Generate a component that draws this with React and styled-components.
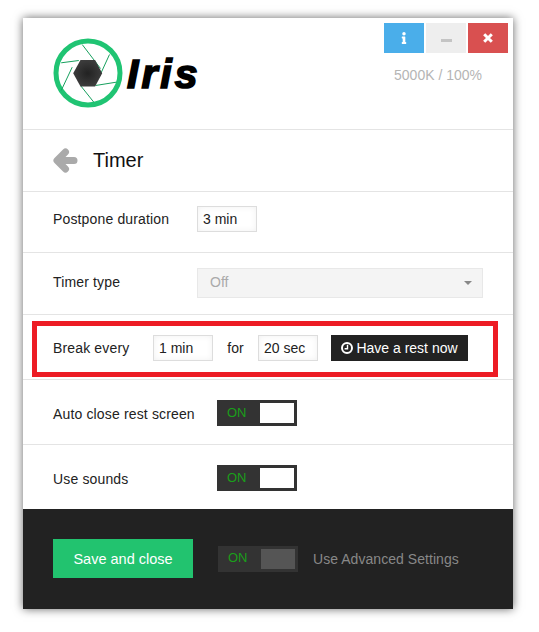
import React from "react";
import styled, { createGlobalStyle } from "styled-components";
import { FaInfo } from "react-icons/fa";

const Global = createGlobalStyle`
  html, body { margin: 0; padding: 0; background: #fff; }
  body { font-family: "Liberation Sans", Arial, sans-serif; font-size: 14px; color: #222; }
  * { box-sizing: border-box; }
`;

const Page = styled.div`
  width: 539px;
  height: 632px;
  padding: 18px 26px 23px 23px;
  overflow: hidden;
`;

const Panel = styled.div`
  width: 490px;
  height: 591px;
  background: #fff;
  display: flex;
  flex-direction: column;
  box-shadow: 0 0 9px rgba(0, 0, 0, 0.6);
`;

const Header = styled.header`
  height: 112px;
  flex: none;
  display: flex;
  justify-content: space-between;
  border-bottom: 1px solid #e4e4e4;
  padding: 5px 5px 0 30px;
`;

const Brand = styled.div`
  display: flex;
  align-items: flex-start;
  padding-top: 15px;
`;

const LogoMark = styled.svg`
  width: 70px;
  height: 70px;
  flex: none;
`;

const Wordmark = styled.span`
  font-family: "Liberation Sans", Arial, sans-serif;
  font-weight: 700;
  font-style: italic;
  font-size: 41px;
  line-height: 46px;
  margin: 13px 0 0 4px;
  letter-spacing: 3px;
  color: #000;
  -webkit-text-stroke: 1.7px #000;
`;

const HeaderRight = styled.div`
  display: flex;
  flex-direction: column;
  align-items: flex-end;
`;

const WindowButtons = styled.div`
  display: flex;
  gap: 2px;
`;

const WindowButton = styled.div`
  width: 40px;
  height: 30px;
  display: flex;
  align-items: center;
  justify-content: center;
  background: ${(p) => p.$bg};
  color: ${(p) => p.$fg};
  font-size: 12px;
`;

const MinusGlyph = styled.span`
  width: 11px;
  height: 3px;
  margin-top: 5px;
  background: #c4c4c4;
`;

const Status = styled.div`
  margin: 14px 26px 0 0;
  font-size: 14px;
  line-height: 16px;
  color: #b5b5b5;
`;

const TitleRow = styled.div`
  height: 62px;
  flex: none;
  display: flex;
  align-items: center;
  padding: 0 0 0 30px;
  border-bottom: 1px solid #e4e4e4;
`;

const BackIcon = styled.svg`
  width: 25px;
  height: 25px;
  flex: none;
  margin-right: 15px;
`;

const Title = styled.h1`
  margin: 0;
  font-size: 20px;
  font-weight: 400;
  color: #111;
`;

const Row = styled.div`
  height: ${(p) => p.$h}px;
  flex: none;
  display: flex;
  align-items: center;
  padding: ${(p) => p.$pt || 0}px 0 ${(p) => p.$pb || 0}px 30px;
  position: relative;
  border-bottom: ${(p) => (p.$last ? "none" : "1px solid #e4e4e4")};
`;

const Label = styled.span`
  width: ${(p) => (p.$w ? `${p.$w}px` : "auto")};
  flex: none;
  white-space: nowrap;
  letter-spacing: 0.15px;
  margin-top: ${(p) => p.$dy || 0}px;
`;

const ValueInput = styled.input`
  width: 60px;
  height: 26px;
  flex: none;
  border: 1px solid #ddd;
  padding: 0 5px;
  font: 14px "Liberation Sans", Arial, sans-serif;
  color: #222;
  background: #fff;
  outline: none;
  box-shadow: inset 0 0 6px rgba(0, 0, 0, 0.06);
`;

const Select = styled.div`
  width: 286px;
  height: 30px;
  flex: none;
  display: flex;
  align-items: center;
  justify-content: space-between;
  padding: 0 10px 2px 12px;
  background: #f4f4f4;
  border: 1px solid #e8e8e8;
  color: #aaa;
`;

const Caret = styled.span`
  width: 0;
  height: 0;
  margin-top: 2px;
  border-left: 4px solid transparent;
  border-right: 4px solid transparent;
  border-top: 4px solid #888;
`;

const ForLabel = styled.span`
  flex: none;
  width: 45px;
  text-align: center;
`;

const RestButton = styled.button`
  width: 137px;
  height: 26px;
  flex: none;
  margin-left: 13px;
  display: flex;
  align-items: center;
  justify-content: center;
  gap: 3px;
  border: 0;
  padding: 0;
  background: #222;
  color: #fff;
  font: 14px "Liberation Sans", Arial, sans-serif;
`;

const Highlight = styled.div`
  position: absolute;
  left: 9px;
  top: 6px;
  width: 466px;
  height: 56px;
  border: 5px solid #ed1c24;
  pointer-events: none;
`;

const Toggle = styled.div`
  width: 80px;
  height: 26px;
  flex: none;
  display: flex;
  align-items: center;
  justify-content: space-between;
  padding: 3px 3px 3px 10px;
  background: #333;
`;

const ToggleText = styled.span`
  color: #1a9f1a;
  font-size: 13px;
  margin-top: -2px;
`;

const Knob = styled.span`
  width: 34px;
  height: 20px;
  background: ${(p) => p.$bg};
`;

const Footer = styled.footer`
  flex: 1;
  display: flex;
  align-items: center;
  padding: 0 0 1px 30px;
  background: #222;
`;

const SaveButton = styled.button`
  width: 140px;
  height: 39px;
  flex: none;
  border: 0;
  padding: 0;
  background: #22c36f;
  color: #fff;
  font: 14.5px "Liberation Sans", Arial, sans-serif;
  margin-right: 25px;
`;

const AdvancedLabel = styled.span`
  margin-left: 15px;
  color: #888;
  letter-spacing: 0.05px;
`;

const blades = [
  [60.7, 62.3, 78.3, 60],
  [81.7, 44, 100, 68],
  [109, 54, 98, 78],
  [115.7, 81.7, 95, 85],
  [93.3, 101.7, 80, 85],
  [60.7, 90, 71.7, 66.7],
];

function Logo() {
  return (
    <LogoMark viewBox="52.5 37.5 70 70">
      <defs>
        <radialGradient id="hex">
          <stop offset="0" stopColor="#222" />
          <stop offset="1" stopColor="#3c3c3c" />
        </radialGradient>
      </defs>
      <circle cx="87.5" cy="72.5" r="32" fill="#fff" stroke="#20c473" strokeWidth="5" />
      {blades.map(([a, b, c, d], i) => (
        <line key={i} x1={a} y1={b} x2={c} y2={d} stroke="#17a05e" strokeWidth="1" />
      ))}
      <polygon points="72.7,72.7 80,59.5 94.6,59.5 101.7,72.7 94.6,86 80,86" fill="url(#hex)" />
    </LogoMark>
  );
}

function ArrowLeft() {
  return (
    <BackIcon viewBox="0 0 25 25">
      <path
        d="M12.5 4 L4 12.5 L12.5 21 M5 12.5 H21"
        fill="none"
        stroke="#aaa"
        strokeWidth="7"
        strokeLinejoin="round"
        strokeLinecap="round"
      />
    </BackIcon>
  );
}

function CloseGlyph() {
  return (
    <svg width="10" height="10" viewBox="0 0 10 10">
      <path d="M1.2 1.2 L8.8 8.8 M8.8 1.2 L1.2 8.8" stroke="#fff" strokeWidth="3" />
    </svg>
  );
}

function ClockGlyph() {
  return (
    <svg width="12" height="12" viewBox="0 0 12 12">
      <circle cx="6" cy="6" r="5" fill="none" stroke="#fff" strokeWidth="2" />
      <path d="M6.5 2.8 V6.7 H3.6" fill="none" stroke="#fff" strokeWidth="1.4" />
    </svg>
  );
}

export default function App() {
  return (
    <Page>
      <Global />
      <Panel>
        <Header>
          <Brand>
            <Logo />
            <Wordmark>Iris</Wordmark>
          </Brand>
          <HeaderRight>
            <WindowButtons>
              <WindowButton $bg="#4aaeea" $fg="#fff"><FaInfo /></WindowButton>
              <WindowButton $bg="#eeeeee" $fg="#c4c4c4"><MinusGlyph /></WindowButton>
              <WindowButton $bg="#d95050" $fg="#fff"><CloseGlyph /></WindowButton>
            </WindowButtons>
            <Status>5000K / 100%</Status>
          </HeaderRight>
        </Header>
        <TitleRow>
          <ArrowLeft />
          <Title>Timer</Title>
        </TitleRow>
        <Row $h={61} $pb={6}>
          <Label $w={144}>Postpone duration</Label>
          <ValueInput readOnly value="3 min" />
        </Row>
        <Row $h={62} $pb={1}>
          <Label $w={144} $dy={-2}>Timer type</Label>
          <Select>
            Off
            <Caret />
          </Select>
        </Row>
        <Row $h={65} $pt={2}>
          <Label $w={100}>Break every</Label>
          <ValueInput readOnly value="1 min" />
          <ForLabel>for</ForLabel>
          <ValueInput readOnly value="20 sec" />
          <RestButton><ClockGlyph />Have a rest now</RestButton>
          <Highlight />
        </Row>
        <Row $h={65} $pt={2}>
          <Label $w={164} $dy={2}>Auto close rest screen</Label>
          <Toggle><ToggleText>ON</ToggleText><Knob $bg="#fff" /></Toggle>
        </Row>
        <Row $h={64} $pt={2} $last>
          <Label $w={164} $dy={2}>Use sounds</Label>
          <Toggle><ToggleText>ON</ToggleText><Knob $bg="#fff" /></Toggle>
        </Row>
        <Footer>
          <SaveButton>Save and close</SaveButton>
          <Toggle><ToggleText>ON</ToggleText><Knob $bg="#555" /></Toggle>
          <AdvancedLabel>Use Advanced Settings</AdvancedLabel>
        </Footer>
      </Panel>
    </Page>
  );
}
